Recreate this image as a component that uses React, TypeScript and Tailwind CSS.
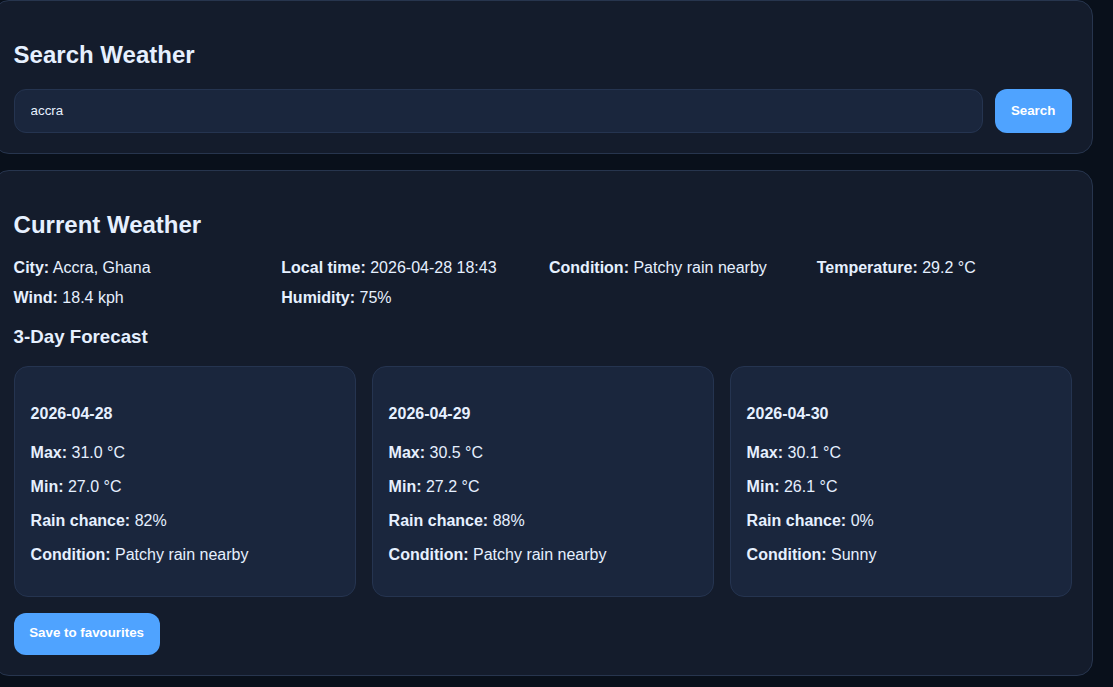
const current = [
  ["City:", "Accra, Ghana"],
  ["Local time:", "2026-04-28 18:43"],
  ["Condition:", "Patchy rain nearby"],
  ["Temperature:", "29.2 °C"],
  ["Wind:", "18.4 kph"],
  ["Humidity:", "75%"],
];

const forecast = [
  { date: "2026-04-28", max: "31.0 °C", min: "27.0 °C", rain: "82%", condition: "Patchy rain nearby" },
  { date: "2026-04-29", max: "30.5 °C", min: "27.2 °C", rain: "88%", condition: "Patchy rain nearby" },
  { date: "2026-04-30", max: "30.1 °C", min: "26.1 °C", rain: "0%", condition: "Sunny" },
];

function Field({ label, value }: { label: string; value: string }) {
  return (
    <span>
      <strong className="font-bold">{label}</strong> {value}
    </span>
  );
}

function ForecastCard({ day }: { day: (typeof forecast)[number] }) {
  return (
    <div className="rounded-[14px] border border-[#253450] bg-[#1a263d] px-4 pt-[17px] pb-4 leading-[18px]">
      <h4 className="my-[21px] font-bold">{day.date}</h4>
      <p className="my-4">
        <Field label="Max:" value={day.max} />
      </p>
      <p className="my-4">
        <Field label="Min:" value={day.min} />
      </p>
      <p className="my-4">
        <Field label="Rain chance:" value={day.rain} />
      </p>
      <p className="my-4">
        <Field label="Condition:" value={day.condition} />
      </p>
    </div>
  );
}

export default function App() {
  return (
    <div className="h-[687px] w-[1113px] overflow-hidden bg-[#09101b] font-['Liberation_Sans',Arial,sans-serif] text-base leading-[18.4px] text-[#e6f0ff]">
      <div className="-ml-[7.4px] flex w-[1100px] flex-col gap-4">
        <section className="rounded-2xl border border-[#27354e] bg-[#141c2c] p-5">
          <h2 className="mt-[19.92px] mb-[20.92px] text-2xl leading-[27.6px] font-bold">Search Weather</h2>
          <div className="flex gap-3">
            <input
              defaultValue="accra"
              className="h-11 flex-1 rounded-xl border border-[#253450] bg-[#1a263d] px-4 pb-0.5 text-[13.33px] text-[#e6f0ff] outline-none"
            />
            <button className="h-11 w-[77px] rounded-xl bg-[#4fa3ff] pb-px text-[13.33px] font-bold text-white">
              Search
            </button>
          </div>
        </section>

        <section className="rounded-2xl border border-[#27354e] bg-[#141c2c] p-5">
          <h2 className="my-[19.92px] text-2xl leading-[27.6px] font-bold">Current Weather</h2>
          <div className="grid grid-cols-4 gap-x-[12.8px] gap-y-3">
            {current.map(([label, value]) => (
              <Field key={label} label={label} value={value} />
            ))}
          </div>
          <h3 className="mt-[18.72px] mb-[17.72px] text-[18.72px] leading-[21.5px] font-bold">3-Day Forecast</h3>
          <div className="grid grid-cols-3 gap-4">
            {forecast.map((day) => (
              <ForecastCard key={day.date} day={day} />
            ))}
          </div>
          <button className="mt-4 h-[42px] w-[146px] rounded-xl bg-[#4fa3ff] text-[13.33px] font-bold text-white">
            Save to favourites
          </button>
        </section>
      </div>
    </div>
  );
}
